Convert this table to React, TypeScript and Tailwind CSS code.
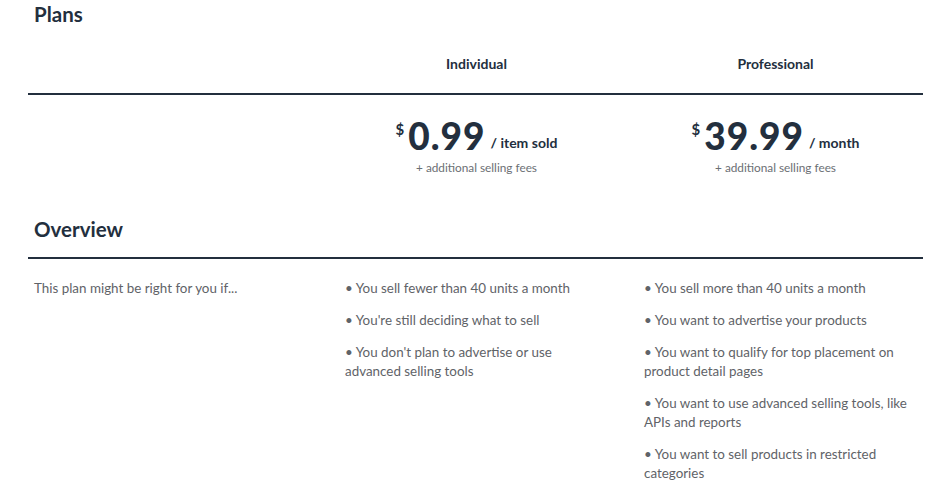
const individual = [
  ['You sell fewer than 40 units a month'],
  ["You're still deciding what to sell"],
  ["You don't plan to advertise or use advanced selling tools"],
]

const professional = [
  ['You sell more than 40 units a month'],
  ['You want to advertise your products'],
  ['You want to qualify for top placement on product detail pages'],
  ['You want to use advanced selling tools, like APIs and reports'],
  ['You want to sell products in restricted categories'],
]

function Price({ amount, unit }: { amount: string; unit: string }) {
  return (
    <div className="flex flex-col items-center">
      <div className="flex items-start text-[#232f3e]">
        <span className="text-[15px] font-bold leading-none mt-[6px] mr-[4px]">$</span>
        <span className="text-[37px] font-black leading-[40px] tracking-[1px]">{amount}</span>
        <span className="text-[14px] font-bold mt-[16px] ml-[5px]">/ {unit}</span>
      </div>
      <div className="text-[11.8px] text-[#6b6f74] mt-[3px]">+ additional selling fees</div>
    </div>
  )
}

function Bullets({ items }: { items: string[][] }) {
  return (
    <div className="flex flex-col gap-[13px]">
      {items.map(([t]) => (
        <p key={t} className="leading-[19px]">• {t}</p>
      ))}
    </div>
  )
}

export default function App() {
  return (
    <div className="bg-white w-[950px] h-[491px] overflow-hidden font-['Lato',sans-serif] text-[#232f3e]">
      <div className="pl-[28px] pr-[27px]">
        <h2 className="text-[20.5px] font-bold leading-[24px] pl-[6px] mt-[2px]">Plans</h2>

        <div className="grid grid-cols-[299px_299px_299px] h-[71px] items-center border-b-2 border-[#232f3e] -mt-[2px]">
          <div />
          <div className="text-center text-[14px] font-bold pt-[10px]">Individual</div>
          <div className="text-center text-[14px] font-bold pt-[10px]">Professional</div>
        </div>

        <div className="grid grid-cols-[299px_299px_299px] pt-[21px]">
          <div />
          <Price amount="0.99" unit="item sold" />
          <Price amount="39.99" unit="month" />
        </div>

        <h2 className="text-[20.5px] font-bold leading-[24px] pl-[6px] mt-[40px] pb-[16px] border-b-2 border-[#232f3e]">Overview</h2>

        <div className="grid grid-cols-[299px_299px_299px] pt-[20px] text-[13.4px] text-[#5f6368]">
          <p className="pl-[6px] leading-[19px]">This plan might be right for you if...</p>
          <div className="pl-[18px] pr-[16px]">
            <Bullets items={individual} />
          </div>
          <div className="pl-[18px] pr-[16px]">
            <Bullets items={professional} />
          </div>
        </div>
      </div>
    </div>
  )
}
